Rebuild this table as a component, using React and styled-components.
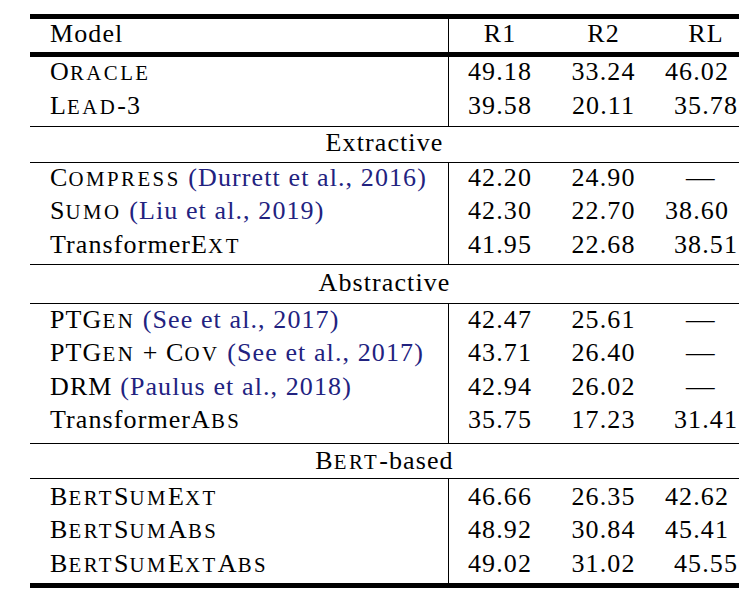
import styled, { createGlobalStyle } from "styled-components";

const GlobalStyle = createGlobalStyle`
  html, body {
    margin: 0;
    padding: 0;
    background: #fff;
  }
`;

const Page = styled.div`
  padding: 14px 0 0 30px;
  font-family: "Liberation Serif", "Times New Roman", serif;
  font-size: 26px;
  line-height: 29px;
  letter-spacing: 1.1px;
  color: #000;
`;

const Table = styled.div`
  width: 709px;
`;

const Rule = styled.div`
  height: ${(p) => (p.$thick ? 5 : 1)}px;
  background: #000;
`;

const Group = styled.div`
  display: grid;
  grid-template-columns: 418px 104px 103px 1fr;
  grid-auto-rows: 29px;
  row-gap: 4.5px;
  padding: ${(p) => p.$top}px 0 ${(p) => p.$bottom}px 0;
  background: linear-gradient(#000, #000) 418px 0 / 1px 100% no-repeat;
`;

const Name = styled.div`
  padding-left: 20px;
  white-space: nowrap;
`;

const Num = styled.div`
  text-align: center;
  white-space: nowrap;

  &:last-child {
    padding-left: 18px;
  }
`;

const Dash = styled.span`
  display: inline-block;
  padding-left: 8px;
  transform: scaleX(1.1);
`;

const Section = styled.div`
  height: 29px;
  text-align: center;
  padding: ${(p) => p.$top}px 0 ${(p) => p.$bottom}px 0;
`;

const Sc = styled.span`
  font-size: 0.8em;
  line-height: 1;
  letter-spacing: 2.5px;
`;

const Cite = styled.span`
  color: #22227f;
`;

const NONE = <Dash>—</Dash>;

const groups = [
  {
    title: "Extractive",
    pad: [1, 4.5],
    rowPad: [0, 5.5],
    rows: [
      [<>C<Sc>OMPRESS</Sc> <Cite>(Durrett et al., 2016)</Cite></>, "42.20", "24.90", NONE],
      [<>S<Sc>UMO</Sc> <Cite>(Liu et al., 2019)</Cite></>, "42.30", "22.70", "38.60"],
      [<>TransformerE<Sc>XT</Sc></>, "41.95", "22.68", "38.51"],
    ],
  },
  {
    title: "Abstractive",
    pad: [3, 5.7],
    rowPad: [1, 9],
    rows: [
      [<>PTG<Sc>EN</Sc> <Cite>(See et al., 2017)</Cite></>, "42.47", "25.61", NONE],
      [<>PTG<Sc>EN</Sc> + C<Sc>OV</Sc> <Cite>(See et al., 2017)</Cite></>, "43.71", "26.40", NONE],
      [<>DRM <Cite>(Paulus et al., 2018)</Cite></>, "42.94", "26.02", NONE],
      [<>TransformerA<Sc>BS</Sc></>, "35.75", "17.23", "31.41"],
    ],
  },
  {
    title: <>B<Sc>ERT</Sc>-based</>,
    pad: [2, 3],
    rowPad: [2.4, 5.3],
    rows: [
      [<>B<Sc>ERT</Sc>S<Sc>UM</Sc>E<Sc>XT</Sc></>, "46.66", "26.35", "42.62"],
      [<>B<Sc>ERT</Sc>S<Sc>UM</Sc>A<Sc>BS</Sc></>, "48.92", "30.84", "45.41"],
      [<>B<Sc>ERT</Sc>S<Sc>UM</Sc>E<Sc>XT</Sc>A<Sc>BS</Sc></>, "49.02", "31.02", "45.55"],
    ],
  },
];

const baselines = [
  [<>O<Sc>RACLE</Sc></>, "49.18", "33.24", "46.02"],
  [<>L<Sc>EAD</Sc>-3</>, "39.58", "20.11", "35.78"],
];

const Rows = ({ rows }) =>
  rows.map((r, i) => [
    <Name key={`n${i}`}>{r[0]}</Name>,
    <Num key={`a${i}`}>{r[1]}</Num>,
    <Num key={`b${i}`}>{r[2]}</Num>,
    <Num key={`c${i}`}>{r[3]}</Num>,
  ]);

const App = () => {
  return (
    <Page>
      <GlobalStyle />
      <Table>
        <Rule $thick />
        <Group $top={0} $bottom={4}>
          <Name>Model</Name>
          <Num>R1</Num>
          <Num>R2</Num>
          <Num>RL</Num>
        </Group>
        <Rule $thick />
        <Group $top={0} $bottom={6.5}>
          <Rows rows={baselines} />
        </Group>
        {groups.map((g, i) => (
          <div key={i}>
            <Rule />
            <Section $top={g.pad[0]} $bottom={g.pad[1]}>
              {g.title}
            </Section>
            <Rule />
            <Group $top={g.rowPad[0]} $bottom={g.rowPad[1]}>
              <Rows rows={g.rows} />
            </Group>
          </div>
        ))}
        <Rule $thick />
      </Table>
    </Page>
  );
};

export default App;
